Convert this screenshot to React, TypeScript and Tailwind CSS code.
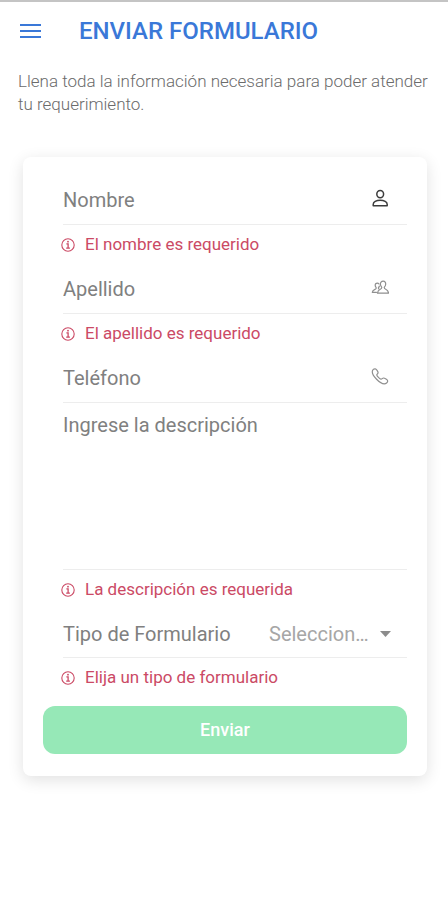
import { useState } from "react"
import type { ReactNode } from "react"

interface FieldProps {
  id: string
  label: string
  type?: string
  icon: ReactNode
}

function PersonIcon() {
  return (
    <svg
      viewBox="0 0 18 22"
      className="h-[22px] w-[18px] shrink-0 text-[#3c3c3c]"
      fill="none"
      stroke="currentColor"
      strokeWidth="1.5"
      strokeLinejoin="round"
      aria-hidden="true"
    >
      <ellipse cx="9.2" cy="5.1" rx="3.4" ry="3.7" />
      <path d="M2.2 16.7v-1.3c0-2.4 3.1-4.2 7-4.2s7 1.8 7 4.2v1.300z" />
    </svg>
  )
}

function PeopleIcon() {
  return (
    <svg
      viewBox="0 0 18 22"
      className="h-[22px] w-[18px] shrink-0 text-[#8f8f8f]"
      fill="none"
      stroke="currentColor"
      strokeWidth="1.2"
      strokeLinejoin="round"
      strokeLinecap="round"
      aria-hidden="true"
    >
      <path d="M12.2 3.200c-1.900 0-2.900 1.300-2.800 3 .1 1.400.7 2.300 1.300 2.900.3 1.300-.2 1.700-1.400 2.200-1.500.7-2.600 1.500-2.800 3.800h11c-.2-2.300-1.300-3.100-2.800-3.800-1.200-.5-1.700-.9-1.400-2.200.7-.6 1.300-1.500 1.400-2.900.1-1.700-.7-3-2.500-3z" />
      <path d="M8 6c-.4-.6-1-.9-1.700-.9-1.400 0-2.200 1-2.100 2.300.1 1.100.5 1.700 1 2.200.2 1.100-.1 1.400-1.200 1.800-1.500.6-2.500 1.100-2.700 2.900h4.200M8.400 8c-.2.800-.5 1.300-1 1.700-.1.700 0 1.100.5 1.400" />
    </svg>
  )
}

function PhoneIcon() {
  return (
    <svg
      viewBox="0 0 18 22"
      className="h-[22px] w-[18px] shrink-0 text-[#8f8f8f]"
      fill="none"
      stroke="currentColor"
      strokeWidth="1.2"
      strokeLinejoin="round"
      aria-hidden="true"
    >
      <path d="M1.500 3.600C2 2.400 3.200 1.700 4.200 1.800c1.100.1 2.900 2.700 2.900 3.900 0 .9-1.300 1.500-1.300 2.300 0 1 3 4.100 4.200 4.200.9.100 1.500-1.200 2.400-1.200 1.200 0 4.300 1.900 4.300 3 0 1.300-1.800 2.900-3.400 2.900C8.800 16.900 1.200 8.500 1.300 5c0-.5 0-.9.2-1.400z" />
    </svg>
  )
}

function InfoIcon() {
  return (
    <svg
      viewBox="0 0 14 14"
      className="h-3.5 w-3.5 shrink-0"
      fill="none"
      stroke="currentColor"
      aria-hidden="true"
    >
      <circle cx="7" cy="7" r="6.2" strokeWidth="1.1" />
      <path d="M5.400 5.800h1.700v4.300M5.200 10.200h3.700" strokeWidth="1.300" />
      <circle cx="7" cy="3.700" r=".9" fill="currentColor" stroke="none" />
    </svg>
  )
}

function FieldError({ children }: { children: ReactNode }) {
  return (
    <p className="-ml-0.5 flex h-10 items-center gap-2.5 text-[17px] text-[#cb4a65]">
      <InfoIcon />
      {children}
    </p>
  )
}

function Field({ id, label, type = "text", icon }: FieldProps) {
  return (
    <div className="flex h-[49px] items-center border-b border-[#ededed] pr-[18px]">
      <input
        id={id}
        name={id}
        type={type}
        aria-label={label}
        placeholder={label}
        className="h-full min-w-0 flex-1 bg-transparent text-xl text-[#666] outline-none placeholder:text-[#808080]"
      />
      {icon}
    </div>
  )
}

export default function App() {
  const [tipo, setTipo] = useState("")

  return (
    <div className="min-h-screen border-t-2 border-[#c4c4c4] bg-white font-['Roboto',sans-serif]">
      <header className="flex h-[58px] items-center gap-[38px] px-5 text-[#3a78d8]">
        <button type="button" aria-label="Menú" className="shrink-0">
          <svg viewBox="0 0 21 14" className="h-3.5 w-[21px]" fill="currentColor">
            <path d="M0 0h21v2H0zM0 6h21v2H0zM0 12h21v2H0z" />
          </svg>
        </button>
        <h1 className="text-2xl font-medium whitespace-nowrap">
          ENVIAR FORMULARIO
        </h1>
      </header>

      <p className="pt-2.5 pr-3 pl-[18px] text-[17px] leading-[23px] font-light text-[#6b6b6b]">
        Llena toda la información necesaria para poder atender tu requerimiento.
      </p>

      <main className="mt-[41px] mr-[21px] ml-[23px] rounded-lg bg-white px-5 pt-[19px] pb-[22px] shadow-[0_4px_16px_rgba(0,0,0,0.12)]">
        <form onSubmit={(e) => e.preventDefault()}>
          <div className="pl-5">
            <Field id="nombre" label="Nombre" icon={<PersonIcon />} />
            <FieldError>El nombre es requerido</FieldError>

            <Field id="apellido" label="Apellido" icon={<PeopleIcon />} />
            <FieldError>El apellido es requerido</FieldError>

            <Field id="telefono" label="Teléfono" type="tel" icon={<PhoneIcon />} />

            <textarea
              id="descripcion"
              name="descripcion"
              aria-label="Ingrese la descripción"
              placeholder="Ingrese la descripción"
              className="block h-[167px] w-full resize-none border-b border-[#ededed] bg-transparent pt-2 text-xl text-[#666] outline-none placeholder:text-[#808080]"
            />
            <FieldError>La descripción es requerida</FieldError>

            <div className="flex h-12 items-center justify-between border-b border-[#ededed] pr-4">
              <label htmlFor="tipo" className="text-xl whitespace-nowrap text-[#808080]">
                Tipo de Formulario
              </label>
              <div className="flex items-center gap-2">
                <select
                  id="tipo"
                  name="tipo"
                  value={tipo}
                  onChange={(e) => setTipo(e.target.value)}
                  className="w-[103px] appearance-none truncate bg-transparent text-xl text-[#a6a6a6] outline-none"
                >
                  <option value="">Seleccionar</option>
                  <option value="peticion">Petición</option>
                  <option value="queja">Queja</option>
                  <option value="reclamo">Reclamo</option>
                </select>
                <svg
                  viewBox="0 0 11 6"
                  className="h-1.5 w-[11px] shrink-0 text-[#8c8c8c]"
                  fill="currentColor"
                  aria-hidden="true"
                >
                  <path d="M0 0h11L5.5 6z" />
                </svg>
              </div>
            </div>
            <FieldError>Elija un tipo de formulario</FieldError>
          </div>

          <button
            type="submit"
            className="mt-2 h-12 w-full rounded-xl bg-[#96e8b7] text-lg font-medium text-white"
          >
            Enviar
          </button>
        </form>
      </main>
    </div>
  )
}
